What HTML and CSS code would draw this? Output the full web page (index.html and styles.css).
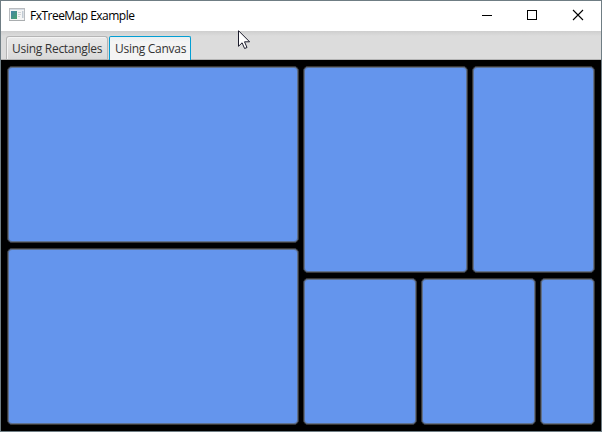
FILE: index.html
```html
<!DOCTYPE html>
<html lang="en">
<head>
<meta charset="utf-8">
<title>FxTreeMap Example</title>
<link rel="stylesheet" href="styles.css">
</head>
<body>
<div class="window">
  <header class="titlebar">
    <svg class="app-icon" width="16" height="14" viewBox="0 0 16 14">
      <defs><linearGradient id="pane" x1="0" y1="0" x2="1" y2="1"><stop offset="0" stop-color="#4584a8"/><stop offset="1" stop-color="#49a36c"/></linearGradient></defs>
      <rect x=".5" y=".5" width="15" height="12" fill="#f5f5f5" stroke="#b9bcc0"/>
      <path d="M1 1.5h14" stroke="#d5dce4"/>
      <rect x="2" y="3" width="6" height="8" fill="url(#pane)"/>
      <path d="M9 4.5h3M9 6.5h3M9 8.5h2" stroke="#d0d3d5"/>
      <rect x="13" y="3" width="1.5" height="7" fill="#c2cbd4"/>
      <path d="M0 12.5h16" stroke="#a9adaf"/>
    </svg>
    <h1 class="title">FxTreeMap Example</h1>
    <div class="controls">
      <svg width="46" height="30" viewBox="0 0 46 30"><path d="M19 14.5h10" stroke="#000"/></svg>
      <svg width="46" height="30" viewBox="0 0 46 30"><rect x="18.5" y="9.5" width="9" height="9" fill="none" stroke="#000"/></svg>
      <svg width="46" height="30" viewBox="0 0 46 30"><path d="M18 9l10 10M28 9l-10 10" stroke="#000" stroke-width="1.1"/></svg>
    </div>
  </header>
  <nav class="tabs">
    <div class="tab"><span class="label">Using Rectangles</span></div>
    <div class="tab selected"><span class="label">Using Canvas</span></div>
  </nav>
  <main class="treemap">
    <div class="column left"><div class="tile"></div><div class="tile"></div></div>
    <div class="column right">
      <div class="row upper"><div class="tile"></div><div class="tile"></div></div>
      <div class="row lower"><div class="tile"></div><div class="tile"></div><div class="tile"></div></div>
    </div>
  </main>
  <svg class="cursor" width="13" height="20" viewBox="0 0 13 20"><path d="M.5 .7v15.6l3.6-3.5 2.5 5.7 2.4-1-2.5-5.7h5.1z" fill="#fff" stroke="#1b1b2b"/></svg>
</div>
</body>
</html>
```
FILE: styles.css
```css
* { box-sizing: border-box; }
body { margin: 0; font-family: "Open Sans", "Noto Sans", sans-serif; }
.window {
  position: relative;
  display: flex;
  flex-direction: column;
  width: 602px;
  height: 432px;
  border: 1px solid #6f7d84;
  background: #fff;
  overflow: hidden;
}
.titlebar { display: flex; flex: 0 0 30px; padding-left: 8px; }
.app-icon { margin-top: 7px; }
.title {
  margin: 0 0 0 5px;
  width: 105px;
  font-size: 12px;
  font-weight: 400;
  line-height: 30px;
  letter-spacing: -0.52px;
  white-space: nowrap;
  color: #000;
}
.controls { display: flex; margin-left: auto; }
.tabs {
  display: flex;
  align-items: flex-end;
  gap: 1px;
  flex: 0 0 29px;
  padding-left: 5px;
  background: linear-gradient(#cecece, #dcdcdc 5px);
  border-bottom: 1px solid #b4b4b4;
}
.tab {
  width: 102px;
  height: 23px;
  padding-left: 5px;
  border: 1px solid #b5b5b5;
  border-bottom: 0;
  border-radius: 3px 3px 0 0;
  background: linear-gradient(#eaeaea, #d9d9d9);
  box-shadow: inset 1px 1px #f4f4f4;
}
.tab.selected {
  width: 82px;
  height: 24px;
  margin-bottom: -1px;
  border-color: #039ed3;
  border-radius: 2px 2px 0 0;
  background: linear-gradient(#e9eff1, #f4f4f4 5px);
  box-shadow: none;
}
.label {
  display: block;
  font-size: 12px;
  line-height: 24px;
  letter-spacing: -0.28px;
  white-space: nowrap;
  color: #333;
}
.treemap {
  display: grid;
  grid-template-columns: 292px 292px;
  gap: 4px;
  flex: 1;
  padding: 6px;
  background: #000;
}
.column { display: grid; gap: 5px; }
.left { grid-template-rows: 177px 177px; }
.right { grid-template-rows: 207px 147px; }
.row { display: grid; gap: 4px; }
.upper { grid-template-columns: 165px 123px; }
.lower { grid-template-columns: 114px 115px 55px; }
.tile {
  background: #6495ed;
  border: 1px solid #393837;
  border-radius: 5px;
  box-shadow: inset 0 0 0 1px #5f718f;
}
.cursor { position: absolute; left: 237px; top: 29px; }
```
